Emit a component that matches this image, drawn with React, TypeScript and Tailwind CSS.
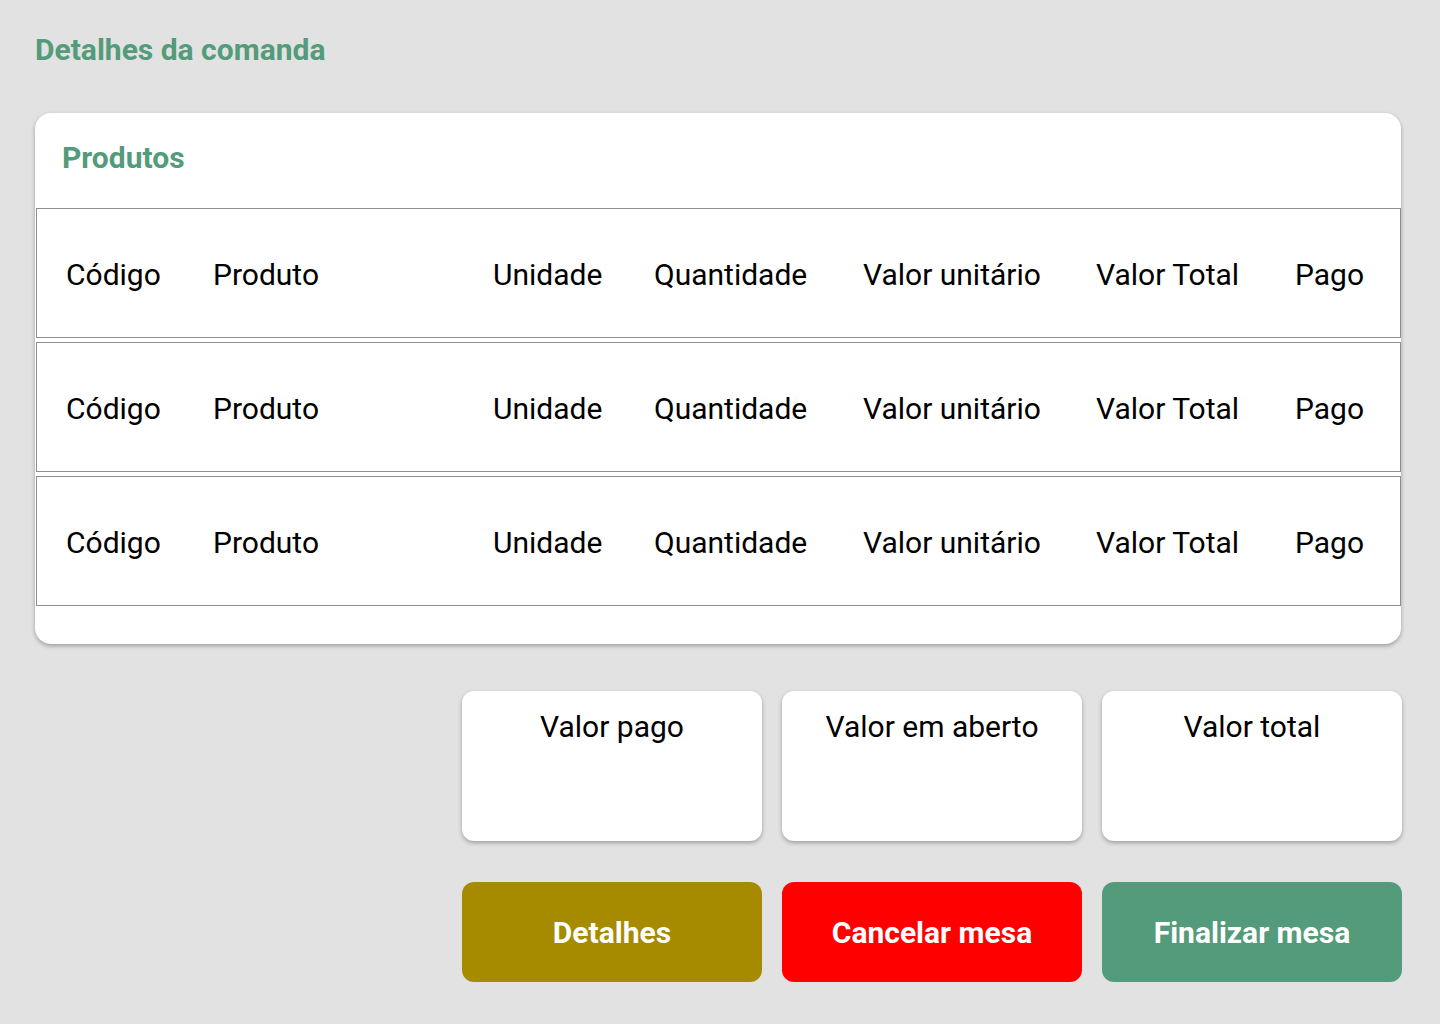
const columns = [
  { label: "Código", width: "w-[147px]" },
  { label: "Produto", width: "w-[280px]" },
  { label: "Unidade", width: "w-[161px]" },
  { label: "Quantidade", width: "w-[209px]" },
  { label: "Valor unitário", width: "w-[233px]" },
  { label: "Valor Total", width: "w-[199px]" },
  { label: "Pago", width: "flex-1" },
];

const rows = [1, 2, 3];

const totals = ["Valor pago", "Valor em aberto", "Valor total"];

export default function App() {
  return (
    <div
      className="min-h-screen w-full bg-[#e2e2e2] px-[35px] pt-[27px] pb-10"
      style={{ fontFamily: "Roboto, 'Noto Sans', sans-serif" }}
    >
      <h1 className="text-[30px] leading-[45px] font-bold text-[#539b7a]">
        Detalhes da comanda
      </h1>

      {/* produtos */}
      <div className="mt-[41px] w-[1366px] rounded-2xl bg-white pb-[38px] shadow-[0_2px_4px_rgba(0,0,0,0.3)]">
        <div className="h-[95px] px-[27px] pt-[22px]">
          <h2 className="text-[30px] leading-[45px] font-bold text-[#539b7a]">
            Produtos
          </h2>
        </div>
        <div className="flex flex-col gap-[4px]">
          {rows.map((r) => (
            <div
              key={r}
              className="ml-px flex h-[130px] items-center border border-[#8e8e8e] pl-[29px] pt-[2px] text-[30px] text-black"
            >
              {columns.map((c) => (
                <div key={c.label} className={c.width}>
                  {c.label}
                </div>
              ))}
            </div>
          ))}
        </div>
      </div>

      {/* totais */}
      <div className="mt-[47px] flex justify-end gap-5 w-[1367px]">
        {totals.map((t) => (
          <div
            key={t}
            className="h-[150px] w-[300px] rounded-xl bg-white pt-[13px] text-center text-[30px] leading-[45px] text-black shadow-[0_2px_4px_rgba(0,0,0,0.3)]"
          >
            {t}
          </div>
        ))}
      </div>

      <div className="mt-[41px] flex justify-end gap-5 w-[1367px]">
        <button className="h-[100px] w-[300px] rounded-xl bg-[#a68a00] text-[30px] font-bold text-white">
          Detalhes
        </button>
        <button className="h-[100px] w-[300px] rounded-xl bg-[#ff0000] text-[30px] font-bold text-white">
          Cancelar mesa
        </button>
        <button className="h-[100px] w-[300px] rounded-xl bg-[#539b7a] text-[30px] font-bold text-white">
          Finalizar mesa
        </button>
      </div>
    </div>
  );
}
